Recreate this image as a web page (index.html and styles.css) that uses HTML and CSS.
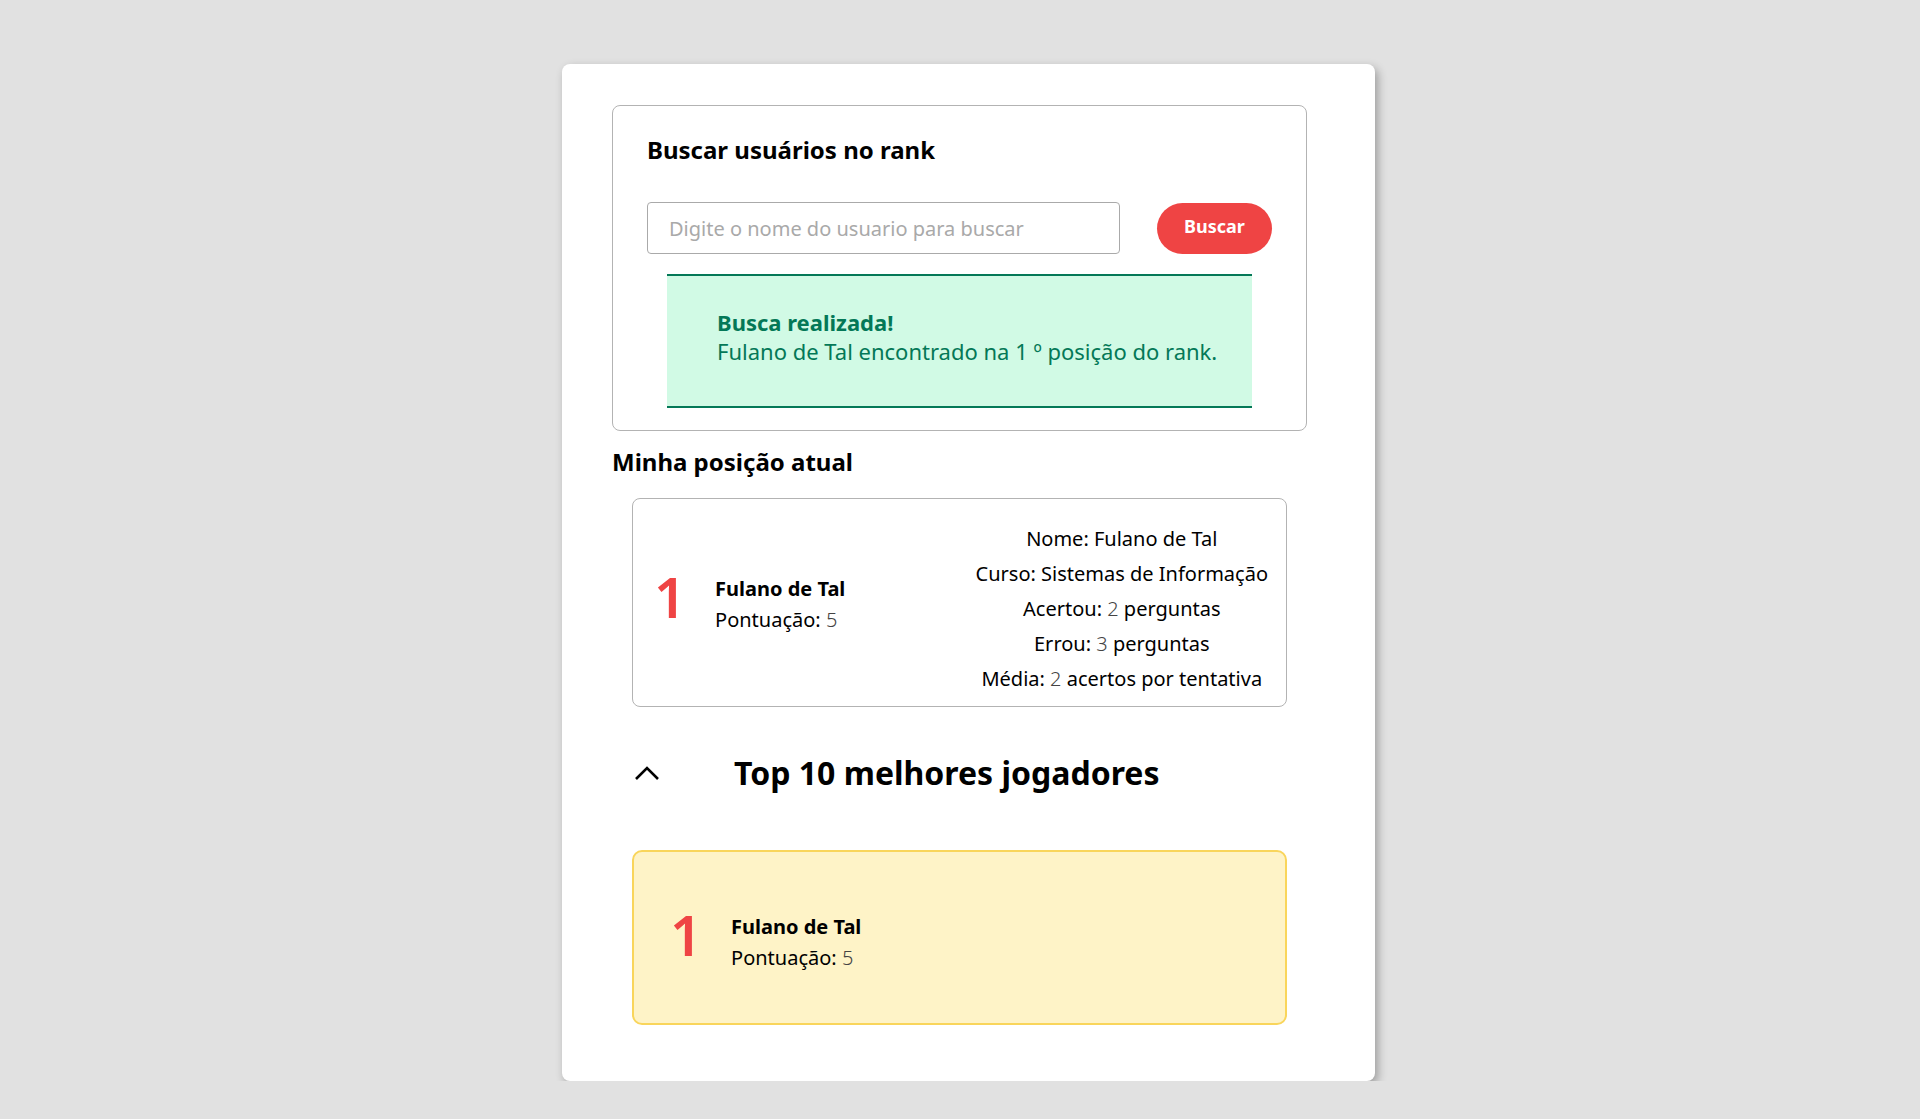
FILE: index.html
```html
<!DOCTYPE html>
<html lang="pt-BR">
<head>
    <meta charset="UTF-8">
    <meta name="viewport" content="width=device-width, initial-scale=1.0">
    <title>Rank</title>
    <link rel="stylesheet" href="styles.css">
</head>
<body>

    <div class="panel">
        <section class="search-box">
            <h2 class="search-title">Buscar usuários no rank</h2>
            <form class="search-form">
                <input type="text" class="search-input" placeholder="Digite o nome do usuario para buscar">
                <button type="button" class="search-button">Buscar</button>
            </form>
            <div class="alert-success">
                <p class="alert-title">Busca realizada!</p>
                <p>Fulano de Tal encontrado na 1 º posição do rank.</p>
            </div>
        </section>

        <h2 class="section-title">Minha posição atual</h2>
        <div class="rank-card">
            <div class="rank-main">
                <span class="rank-number">1</span>
                <div class="rank-info">
                    <p class="rank-name">Fulano de Tal</p>
                    <p>Pontuação: <span class="num">5</span></p>
                </div>
            </div>
            <div class="rank-stats">
                <p>Nome: Fulano de Tal</p>
                <p>Curso: Sistemas de Informação</p>
                <p>Acertou: <span class="num">2</span> perguntas</p>
                <p>Errou: <span class="num">3</span> perguntas</p>
                <p>Média: <span class="num">2</span> acertos por tentativa</p>
            </div>
        </div>

        <button type="button" class="top-toggle">
            <svg class="chevron" viewBox="0 0 26 16"><path d="M2 14L13 3l11 11"></path></svg>
            <span class="top-title">Top 10 melhores jogadores</span>
        </button>

        <div class="rank-card rank-card--gold">
            <div class="rank-main">
                <span class="rank-number">1</span>
                <div class="rank-info">
                    <p class="rank-name">Fulano de Tal</p>
                    <p>Pontuação: <span class="num">5</span></p>
                </div>
            </div>
        </div>
    </div>

</body>
</html>
```

FILE: styles.css
```css
:root {
    --red: #ef4444;
    --green-dark: #047857;
    --green-light: #d1fae5;
    --gold-bg: #fef3c7;
    --gold-border: #f9d55b;
    --border: #b3b3b3;
}

* {
    margin: 0;
    padding: 0;
    box-sizing: border-box;
}

body {
    font-family: "Noto Sans", "Open Sans", Arial, sans-serif;
    background-color: #e1e1e1;
    color: #000;
}

.panel {
    width: 813px;
    margin: 64px 0 0 562px;
    padding: 41px 68px 56px 50px;
    background-color: #fff;
    border-radius: 8px;
    box-shadow: 3px 4px 10px rgba(0, 0, 0, 0.3);
}

/* busca */
.search-box {
    border: 1px solid var(--border);
    border-radius: 8px;
    padding: 27px 34px 22px;
}

.search-title {
    font-size: 24px;
    font-weight: 700;
}

.search-form {
    display: flex;
    justify-content: space-between;
    align-items: center;
    margin-top: 36px;
}

.search-input {
    width: 473px;
    height: 52px;
    border: 1px solid #aaa;
    border-radius: 4px;
    padding: 0 21px;
    font-family: inherit;
    font-size: 20px;
}

.search-input::placeholder {
    color: #a9a9a9;
}

.search-button {
    width: 115px;
    height: 51px;
    border: none;
    border-radius: 26px;
    background-color: var(--red);
    color: #fff;
    font-family: inherit;
    font-size: 18px;
    font-weight: 700;
    padding-bottom: 4px;
    cursor: pointer;
}

.alert-success {
    margin: 20px 20px 0;
    padding: 32px 16px 40px 50px;
    background-color: var(--green-light);
    border-top: 2px solid var(--green-dark);
    border-bottom: 2px solid var(--green-dark);
    color: var(--green-dark);
    font-size: 22px;
    line-height: 29px;
    white-space: nowrap;
}

.alert-title {
    font-weight: 700;
}

/* minha posicao */
.section-title {
    font-size: 24px;
    font-weight: 700;
    margin: 14px 0 20px;
}

.rank-card {
    display: flex;
    justify-content: space-between;
    align-items: center;
    margin: 0 20px;
    padding: 22px 18px 10px 21px;
    border: 1px solid var(--border);
    border-radius: 8px;
    font-size: 20px;
}

.rank-main {
    display: flex;
    align-items: center;
    gap: 29px;
    margin-bottom: 10px;
}

.rank-number {
    color: var(--red);
    font-size: 56px;
    font-weight: 600;
    line-height: 40px;
    padding-bottom: 16px;
}

.rank-info {
    line-height: 31px;
}

.rank-name {
    font-weight: 700;
}

.num {
    color: #444;
    font-weight: 300;
}

.rank-stats {
    text-align: center;
    line-height: 35px;
}

/* top 10 */
.top-toggle {
    display: flex;
    align-items: center;
    gap: 74px;
    margin: 44px 0 56px 22px;
    border: none;
    background: none;
    font-family: inherit;
    color: #000;
    cursor: pointer;
}

.chevron {
    width: 26px;
    height: 16px;
    fill: none;
    stroke: #000;
    stroke-width: 2.6;
}

.top-title {
    font-size: 32px;
    font-weight: 700;
}

.rank-card--gold {
    height: 175px;
    padding: 8px 36px 0;
    background-color: var(--gold-bg);
    border: 2px solid var(--gold-border);
    border-radius: 10px;
}

.rank-card--gold .rank-main {
    margin-bottom: 0;
}
```
